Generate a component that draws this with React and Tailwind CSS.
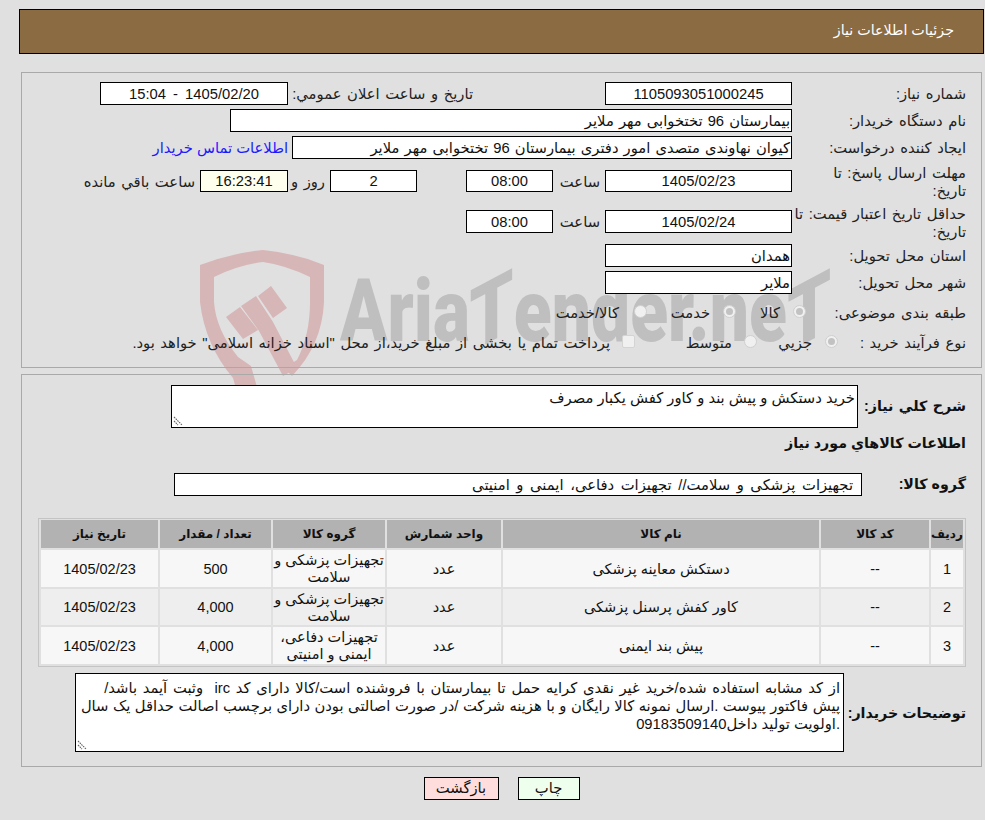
const font = "font-['Liberation_Sans','DejaVu_Sans',sans-serif]";

function Box({ className = "", children, bg = "bg-white", h = "h-[23px]" }) {
  return (
    <div className={`${bg} ${h} shrink-0 border border-black flex items-center justify-center text-[14.75px] leading-none whitespace-nowrap [word-spacing:1px] pt-[1px] ${className}`}>
      {children}
    </div>
  );
}

function Label({ className = "", children }) {
  return <div className={`shrink-0 text-[14.75px] leading-[25px] text-[#222] whitespace-nowrap [word-spacing:1.5px] ${className}`}>{children}</div>;
}

function Radio({ on }) {
  return (
    <span className="shrink-0 -mt-[3px] w-[13px] h-[13px] rounded-full border border-[#cfcfcf] bg-[#f0f0f0] flex items-center justify-center">
      {on && <span className="w-[7px] h-[7px] rounded-full bg-[#c2c2c2]" />}
    </span>
  );
}

function Row({ h, className = "", children }) {
  return <div className={`flex ${h} ${className}`}>{children}</div>;
}

const items = [
  ["1", "--", "دستکش معاینه پزشکی", "عدد", "تجهیزات پزشکی و سلامت", "500", "1405/02/23"],
  ["2", "--", "کاور کفش پرسنل پزشکی", "عدد", "تجهیزات پزشکی و سلامت", "4,000", "1405/02/23"],
  ["3", "--", "پیش بند ایمنی", "عدد", "تجهیزات دفاعی، ایمنی و امنیتی", "4,000", "1405/02/23"],
];
const heads = ["ردیف", "کد کالا", "نام کالا", "واحد شمارش", "گروه کالا", "تعداد / مقدار", "تاریخ نیاز"];
const cols = ["w-[32px]", "w-[108px]", "w-[316px]", "w-[114px]", "w-[112px]", "w-[111px]", "w-[117px]"];
const rowH = ["h-[37px]", "h-[36px]", "h-[37px]"];

function Grip() {
  return (
    <svg className="absolute left-[1px] bottom-[1px]" width="10" height="10" viewBox="0 0 10 10">
      <path d="M1 1L9 9M1 5L5 9" stroke="#666" strokeWidth="1.1" strokeDasharray="1.6 0.8" fill="none" />
    </svg>
  );
}

function Watermark() {
  const skewT = "inline-block -skew-y-[23deg]";
  return (
    <div dir="ltr" className="absolute left-0 top-0 w-[985px] h-[820px] z-0">
      <svg className="absolute left-[198px] top-[248px]" width="130" height="190" viewBox="198 248 130 190">
        <path
          fill="#d7b6b7"
          d="M200 265 Q232 253 263 250 Q295 253 324 265 L324 302 Q322 345 292 376 L284 368 L297 360 Q310 335 310 302 L310 277 Q285 265 263 262 Q238 265 214 277 L214 302 Q216 330 238 357 L251 366 L257 387 L245 420 L233 378 Q205 345 200 302 Z"
        />
        <path fill="#d7b6b7" d="M226 317L240 307L258 330L243 339Z M241 306L256 296L273 322L297 368L283 376L259 331Z M258 296L271 286L287 308L273 318Z" />
      </svg>
      <div className="absolute left-[340px] top-[266px] h-[90px] w-[470px] text-[#bfbfbf]">
        <span className="absolute left-0 top-0 origin-left scale-x-[0.8] font-['Roboto',sans-serif] font-black text-[87px] leading-[90px] whitespace-nowrap">
          Aria<span className={skewT}>T</span>ender.ne<span className={skewT}>T</span>
        </span>
      </div>
    </div>
  );
}

export default function App() {
  return (
    <div dir="rtl" className={`${font} relative w-[985px] h-[820px] overflow-hidden bg-[#e0e0e0] text-[#111]`}>
      <Watermark />
      <div className="relative z-10 pl-[19px] pr-[1px] pt-[9px]">
        <div className="h-[45px] bg-[#8b6b41] border border-black flex items-center pr-[29px] pb-[2px] text-white text-[14.25px]">
          جزئیات اطلاعات نیاز
        </div>

        <div className="mt-[18px] mx-[2px] h-[296px] border border-[#a9a9a9] pr-[15px] pt-[9px]">
          <Row h="h-[27px]">
            <Label className="w-[174px]">شماره نیاز:</Label>
            <Box className="w-[187px]">1105093051000245</Box>
            <Label className="w-[317px] pr-[132px]">تاریخ و ساعت اعلان عمومي:</Label>
            <Box className="w-[188px] [word-spacing:3px]">1405/02/20 - 15:04</Box>
          </Row>
          <Row h="h-[27px]">
            <Label className="w-[174px]">نام دستگاه خریدار:</Label>
            <Box className="w-[562px] justify-start pr-[1px]">بیمارستان 96 تختخوابی مهر ملایر</Box>
          </Row>
          <Row h="h-[34px]">
            <Label className="w-[174px]">ایجاد کننده درخواست:</Label>
            <Box className="w-[500px] justify-start pr-[1px]">کیوان نهاوندی متصدی امور دفتری بیمارستان 96 تختخوابی مهر ملایر</Box>
            <div className="mr-[4px] text-[14.75px] leading-[24px] text-[#1a1aff] whitespace-nowrap">اطلاعات تماس خریدار</div>
          </Row>
          <Row h="h-[40px]">
            <Label className="w-[174px] -mt-[6px] !leading-[18px]">مهلت ارسال پاسخ: تا<br />تاریخ:</Label>
            <Box className="w-[187px]" h="h-[22px]">1405/02/23</Box>
            <Label className="w-[52px] pr-[5px]">ساعت</Label>
            <Box className="w-[87px]" h="h-[22px]">08:00</Box>
            <div className="w-[49px] shrink-0" />
            <Box className="w-[87px]" h="h-[22px]">2</Box>
            <Label className="w-[42px] pr-[5px]">روز و</Label>
            <Box className="w-[88px]" bg="bg-[#ffffee]" h="h-[22px]">16:23:41</Box>
            <Label className="pr-[5px]">ساعت باقي مانده</Label>
          </Row>
          <Row h="h-[34px]">
            <Label className="w-[174px] -mt-[5px] !leading-[18px]">حداقل تاریخ اعتبار قیمت: تا<br />تاریخ:</Label>
            <Box className="w-[187px]">1405/02/24</Box>
            <Label className="w-[52px] pr-[5px]">ساعت</Label>
            <Box className="w-[87px]">08:00</Box>
          </Row>
          <Row h="h-[27px]">
            <Label className="w-[174px]">استان محل تحویل:</Label>
            <Box className="w-[187px] justify-start pr-[1px]">همدان</Box>
          </Row>
          <Row h="h-[27px]">
            <Label className="w-[174px]">شهر محل تحویل:</Label>
            <Box className="w-[187px] justify-start pr-[1px]">ملایر</Box>
          </Row>
          <Row h="h-[30px]" className="items-center">
            <Label className="w-[160px]">طبقه بندی موضوعی:</Label>
            <Radio on />
            <Label className="w-[57px] pr-[13px]">کالا</Label>
            <Radio on />
            <Label className="w-[76px] pr-[13px]">خدمت</Label>
            <Radio />
            <Label className="pr-[15px]">کالا/خدمت</Label>
          </Row>
          <Row h="h-[30px]" className="items-center">
            <Label className="w-[128px]">نوع فرآیند خرید :</Label>
            <Radio on />
            <Label className="w-[68px] pr-[13px]">جزیي</Label>
            <Radio />
            <Label className="w-[109px] pr-[12px]">متوسط</Label>
            <span className="shrink-0 -mt-[3px] w-[13px] h-[13px] rounded-[2px] border border-[#d4d4d4] bg-[#f0f0f0]" />
            <Label className="pr-[12px]">پرداخت تمام یا بخشی از مبلغ خرید،از محل "اسناد خزانه اسلامی" خواهد بود.</Label>
          </Row>
        </div>

        <div className="mt-[6px] mx-[2px] h-[393px] border border-[#a9a9a9] pr-[15px] pt-[10px]">
          <Row h="h-[43px]">
            <div className="w-[108px] shrink-0 leading-[43px] text-[14.25px] font-bold whitespace-nowrap [word-spacing:1.5px]">شرح كلي نیاز:</div>
            <div className="relative w-[687px] h-[43px] bg-white border border-black pr-[2px] pt-[3px] text-[14.75px] leading-[18px]">
              خرید دستکش و پیش بند و کاور کفش یکبار مصرف
              <Grip />
            </div>
          </Row>
          <div className="h-[45px] leading-[30px] text-[14.25px] font-bold">اطلاعات كالاهاي مورد نیاز</div>
          <Row h="h-[23px]">
            <div className="w-[104px] shrink-0 text-[14.25px] font-bold leading-[23px]">گروه کالا:</div>
            <Box className="w-[688px] justify-start pr-[8px] [word-spacing:2.5px]">تجهیزات پزشکی و سلامت// تجهیزات دفاعی، ایمنی و امنیتی</Box>
          </Row>
          <div className="mt-[22px] w-[928px] h-[149px] border border-[#c4c4c4] px-[2px] pt-[1px]">
            <div className="flex gap-[2px] h-[28px] text-[12px] font-bold">
              {heads.map((h, i) => (
                <div key={h} className={`${cols[i]} bg-[#b2b2b2] flex items-center justify-center whitespace-nowrap`}>{h}</div>
              ))}
            </div>
            {items.map((row, r) => (
              <div key={r} className={`flex gap-[2px] ${rowH[r]} mt-[2px] text-[14.5px] leading-[17px] text-center`}>
                {row.map((c, i) => (
                  <div key={i} className={`${cols[i]} ${r === 1 ? "bg-[#eeeeee]" : "bg-[#f7f7f7]"} flex items-center justify-center pt-[1px]`}>{c}</div>
                ))}
              </div>
            ))}
          </div>
          <Row h="h-[79px]" className="mt-[6px]">
            <div className="w-[122px] shrink-0 leading-[81px] text-[14.25px] font-bold whitespace-nowrap">توضیحات خریدار:</div>
            <div className="relative w-[769px] h-[79px] bg-white border border-black pr-[3px] pt-[5px] text-[14.75px] leading-[18px] whitespace-pre">
              <span className="[word-spacing:1.6px]">از کد مشابه استفاده شده/خرید غیر نقدی کرایه حمل تا بیمارستان با فروشنده است/کالا دارای کد irc  وثبت آیمد باشد/</span><br />
              <span className="[word-spacing:0.4px]">پیش فاکتور پیوست .ارسال نمونه کالا رایگان و با هزینه شرکت /در صورت اصالتی بودن دارای برچسب اصالت حداقل یک سال</span><br />
              .اولویت تولید داخل09183509140
              <Grip />
            </div>
          </Row>
        </div>

        <div className="mt-[10px] flex justify-center gap-[19px]">
          <button className="w-[62px] h-[23px] border border-black bg-[#eeffee] text-[14.75px] leading-none">چاپ</button>
          <button className="w-[75px] h-[23px] border border-black bg-[#ffdddd] text-[14.75px] leading-none">بازگشت</button>
        </div>
      </div>
    </div>
  );
}
